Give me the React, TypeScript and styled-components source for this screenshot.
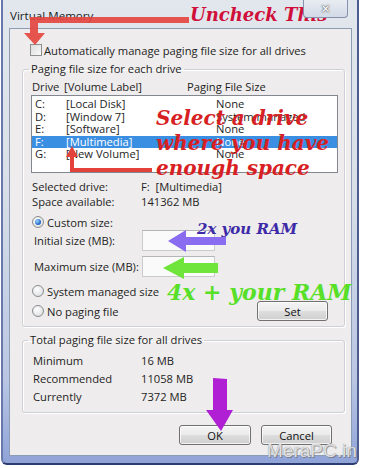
import React from 'react';
import styled, { createGlobalStyle } from 'styled-components';

const uiFont = `'Open Sans', 'Noto Sans', sans-serif`;
const markerFont = `'DejaVu Serif', 'Liberation Serif', serif`;
const uiSize = '11.2px';

const GlobalStyle = createGlobalStyle`
  html, body {
    margin: 0;
    padding: 0;
    background: #ffffff;
  }
  body {
    font-family: ${uiFont};
  }
`;

type Drive = {
  letter: string;
  label: string;
  size: string;
  selected?: boolean;
};

const drives: Drive[] = [
  { letter: 'C:', label: '[Local Disk]', size: 'None' },
  { letter: 'D:', label: '[Window 7]', size: 'System managed' },
  { letter: 'E:', label: '[Software]', size: 'None' },
  { letter: 'F:', label: '[Multimedia]', size: 'None', selected: true },
  { letter: 'G:', label: '[New Volume]', size: 'None' },
];

const totals = [
  { label: 'Minimum', value: '16 MB' },
  { label: 'Recommended', value: '11058 MB' },
  { label: 'Currently', value: '7372 MB' },
];

const Screen = styled.div`
  position: relative;
  width: 366px;
  height: 468px;
  overflow: hidden;
  background: #ffffff;
`;

const Frame = styled.div`
  width: 358px;
  height: 465px;
  margin-left: 1px;
  box-sizing: border-box;
  display: flex;
  flex-direction: column;
  padding: 0 5px 7px 6px;
  border-left: 2px solid #6878ad;
  border-right: 2px solid #4d5c8f;
  border-bottom: 2px solid #2d3c70;
  border-radius: 0 0 6px 6px;
  background: linear-gradient(180deg, #e2e7ed 0%, #d8dfe8 40%, #b9c6e3 82%, #8fa3d8 100%);
`;

const TitleBar = styled.div`
  height: 28px;
  flex: none;
  display: flex;
  align-items: flex-start;
`;

const Title = styled.span`
  align-self: center;
  margin: 2px 0 0 1px;
  font-size: 11.6px;
  color: #1c1c1c;
`;

const CloseBox = styled.span`
  margin-left: auto;
  margin-right: 4px;
  width: 45px;
  height: 18px;
  box-sizing: border-box;
  border: 1px solid #8591ad;
  border-top: none;
  border-radius: 0 0 4px 4px;
  background: linear-gradient(180deg, #e9edf3, #d2dae6);
  display: flex;
  align-items: center;
  justify-content: center;
  font: bold 12px/1 'DejaVu Sans', sans-serif;
  color: #ffffff;
  text-shadow: 0 0 1px #3b3b3b, 0 0 2px #555555;
  position: relative;
  z-index: 3;
`;

const Client = styled.div`
  flex: 1;
  display: flex;
  flex-direction: column;
  padding: 14px 6px 0 12px;
  background: #eeecec;
  border: 1px solid #8d9cb5;
  font-size: ${uiSize};
  color: #1e1e1e;
  white-space: nowrap;
`;

const CheckRow = styled.label`
  display: flex;
  align-items: center;
  gap: 2px;
  height: 14px;
  margin-left: 8px;
`;

const CheckBox = styled.span`
  width: 12px;
  height: 12px;
  box-sizing: border-box;
  border: 1px solid #8e8f8f;
  background: linear-gradient(135deg, #dcdcdc, #f8f8f8);
  flex: none;
`;

const Group = styled.fieldset<{ $top: number }>`
  margin: ${p => p.$top}px 0 0 0;
  padding: 0;
  border: 1px solid #cdd1d6;
  border-radius: 3px;
  box-shadow: inset 1px 1px 0 #ffffff, 1px 1px 0 #ffffff;
  min-width: 0;
`;

const Legend = styled.legend<{ $indent: number }>`
  margin-left: ${p => p.$indent}px;
  padding: 0 2px;
  font-size: ${uiSize};
  line-height: 14px;
`;

const GroupBody = styled.div<{ $pad: string }>`
  padding: ${p => p.$pad};
  display: flex;
  flex-direction: column;
`;

const HeaderRow = styled.div`
  display: grid;
  grid-template-columns: 32px 123px 1fr;
  height: 14px;
  line-height: 14px;
  padding-left: 1px;
`;

const ListBox = styled.div`
  margin-top: 1px;
  height: 78px;
  box-sizing: border-box;
  border: 1px solid #828790;
  background: #ffffff;
  padding-top: 2px;
`;

const ListRow = styled.div<{ $selected?: boolean }>`
  display: grid;
  grid-template-columns: 31px 150px 1fr;
  height: 12.5px;
  line-height: 12.5px;
  padding-left: 3px;
  background: ${p => (p.$selected ? '#3b8fe3' : 'transparent')};
  color: ${p => (p.$selected ? '#ffffff' : '#1e1e1e')};
`;

const InfoGrid = styled.div<{ $row: number; $first: number; $indent: number }>`
  display: grid;
  grid-template-columns: ${p => p.$first}px 1fr;
  grid-auto-rows: ${p => p.$row}px;
  align-items: center;
  padding-left: ${p => p.$indent}px;
`;

const RadioRow = styled.label<{ $gap: number }>`
  display: flex;
  align-items: center;
  gap: 3px;
  height: 14px;
  margin-top: ${p => p.$gap}px;
  padding-left: 1px;
`;

const Radio = styled.span<{ $checked?: boolean }>`
  width: 12px;
  height: 12px;
  box-sizing: border-box;
  flex: none;
  border-radius: 50%;
  border: 1px solid #8a8c8e;
  background: radial-gradient(circle at 40% 35%, #ffffff 0%, #e4e5e7 65%, #cfd1d4 100%);
  display: flex;
  align-items: center;
  justify-content: center;

  &::after {
    content: '';
    width: 6px;
    height: 6px;
    border-radius: 50%;
    background: ${p =>
      p.$checked ? 'radial-gradient(circle at 35% 35%, #9ad6ff, #2266c8 65%, #17408f)' : 'transparent'};
  }
`;

const SizeRow = styled.div<{ $gap: number }>`
  display: grid;
  grid-template-columns: 108px 73px;
  align-items: center;
  height: 21px;
  margin-top: ${p => p.$gap}px;
  padding-left: 3px;
`;

const SizeInput = styled.span`
  height: 21px;
  box-sizing: border-box;
  border: 1px solid #c9cbcf;
  border-top-color: #b3b5b9;
  background: #fafafa;
`;

const SetRow = styled.div`
  display: flex;
  align-items: center;
  justify-content: space-between;
  height: 20px;
  margin-top: 3px;
  padding-right: 10px;
`;

const Button = styled.span<{ $w: number }>`
  width: ${p => p.$w}px;
  height: 20px;
  box-sizing: border-box;
  border: 1px solid #707070;
  border-radius: 3px;
  background: linear-gradient(180deg, #f4f4f4 0%, #ebebeb 48%, #dddddd 52%, #cfcfcf 100%);
  box-shadow: inset 0 0 0 1px rgba(255, 255, 255, 0.75);
  display: flex;
  align-items: center;
  justify-content: center;
  font-size: ${uiSize};
  color: #111111;
`;

const ButtonRow = styled.div`
  display: flex;
  justify-content: flex-end;
  gap: 10px;
  margin-top: 12px;
  padding-right: 13px;
`;

const Marks = styled.svg`
  position: absolute;
  left: 0;
  top: 0;
  pointer-events: none;
  z-index: 2;
`;

const Note = styled.span<{ $x: number; $y: number; $size: number; $color: string }>`
  position: absolute;
  left: ${p => p.$x}px;
  top: ${p => p.$y}px;
  font-family: ${markerFont};
  font-weight: bold;
  font-style: italic;
  font-size: ${p => p.$size}px;
  line-height: 1;
  color: ${p => p.$color};
  white-space: nowrap;
  z-index: 2;
`;

const NoteBlock = styled.div`
  position: absolute;
  left: 156px;
  top: 106px;
  font-family: ${markerFont};
  font-weight: bold;
  font-style: italic;
  font-size: 20px;
  line-height: 25px;
  color: #d71f24;
  white-space: nowrap;
  z-index: 2;
`;

const Watermark = styled.span`
  position: absolute;
  left: 267px;
  top: 441px;
  font: 19px/1 'Liberation Sans', Arial, sans-serif;
  color: rgba(236, 236, 238, 0.9);
  text-shadow: 0 0 1px #7a7a7a, 1px 1px 0 rgba(90, 90, 90, 0.5);
  z-index: 2;
`;

const App = () => (
  <Screen>
    <GlobalStyle />
    <Frame>
      <TitleBar>
        <Title>Virtual Memory</Title>
        <CloseBox>✕</CloseBox>
      </TitleBar>
      <Client>
        <CheckRow>
          <CheckBox />
          <span>Automatically manage paging file size for all drives</span>
        </CheckRow>

        <Group $top={5}>
          <Legend $indent={6}>Paging file size for each drive</Legend>
          <GroupBody $pad="4px 6px 5px 8px">
            <HeaderRow>
              <span>Drive</span>
              <span>[Volume Label]</span>
              <span>Paging File Size</span>
            </HeaderRow>
            <ListBox>
              {drives.map(d => (
                <ListRow key={d.letter} $selected={d.selected}>
                  <span>{d.letter}</span>
                  <span>{d.label}</span>
                  <span>{d.size}</span>
                </ListRow>
              ))}
            </ListBox>
            <InfoGrid $row={15} $first={109} $indent={1} style={{ marginTop: 6 }}>
              <span>Selected drive:</span>
              <span>F:&nbsp; [Multimedia]</span>
              <span>Space available:</span>
              <span>141362 MB</span>
            </InfoGrid>
            <RadioRow $gap={6}>
              <Radio $checked />
              <span>Custom size:</span>
            </RadioRow>
            <SizeRow $gap={1}>
              <span>Initial size (MB):</span>
              <SizeInput />
            </SizeRow>
            <SizeRow $gap={5}>
              <span>Maximum size (MB):</span>
              <SizeInput />
            </SizeRow>
            <RadioRow $gap={7}>
              <Radio />
              <span>System managed size</span>
            </RadioRow>
            <SetRow>
              <RadioRow $gap={0}>
                <Radio />
                <span>No paging file</span>
              </RadioRow>
              <Button $w={71}>Set</Button>
            </SetRow>
          </GroupBody>
        </Group>

        <Group $top={6}>
          <Legend $indent={5}>Total paging file size for all drives</Legend>
          <GroupBody $pad="4px 6px 7px 10px">
            <InfoGrid $row={18} $first={108} $indent={0}>
              {totals.map(t => (
                <React.Fragment key={t.label}>
                  <span>{t.label}</span>
                  <span>{t.value}</span>
                </React.Fragment>
              ))}
            </InfoGrid>
          </GroupBody>
        </Group>

        <ButtonRow>
          <Button $w={72}>OK</Button>
          <Button $w={71}>Cancel</Button>
        </ButtonRow>
      </Client>
    </Frame>

    <Marks width={366} height={468} viewBox="0 0 366 468">
      <path d="M30 17 H189 V23 H38 V33 H45 L35 45 L24 33 H30 Z" fill="#e4463f" opacity={0.92} />
      <path d="M152 170 H72 V156" fill="none" stroke="#e3423a" strokeWidth={4} />
      <polygon points="66,157 78,157 72,146" fill="#e3423a" />
      <polygon points="168,241 186,230 186,237 226,237 226,245 186,245 186,252" fill="#8a6cf0" />
      <polygon points="163,268 184,257 184,263 218,263 218,273 184,273 184,279" fill="#6fe43a" />
      <polygon points="213,378 227,379 227,410 233,410 221,431 206,410 213,410" fill="#b01fd4" />
    </Marks>

    <Note $x={190} $y={6} $size={18} $color="#d0103a">Uncheck This</Note>
    <NoteBlock>
      Select a drive
      <br />
      where you have
      <br />
      enough space
    </NoteBlock>
    <Note $x={197} $y={222} $size={15} $color="#3d2aa8">2x you RAM</Note>
    <Note $x={167} $y={281} $size={22} $color="#58df28">4x + your RAM</Note>
    <Watermark>MeraPC.in</Watermark>
  </Screen>
);

export default App;
